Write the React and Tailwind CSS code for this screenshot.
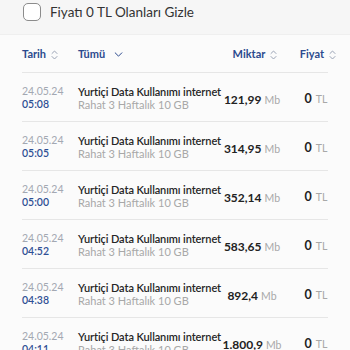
import React from 'react';

const rows = [
  { date: '24.05.24', time: '05:08', amount: '121,99' },
  { date: '24.05.24', time: '05:05', amount: '314,95' },
  { date: '24.05.24', time: '05:00', amount: '352,14' },
  { date: '24.05.24', time: '04:52', amount: '583,65' },
  { date: '24.05.24', time: '04:38', amount: '892,4' },
  { date: '24.05.24', time: '04:11', amount: '1.800,9' },
];

const SortIcon = () => (
  <svg width="7" height="10" viewBox="0 0 7 10" fill="none" stroke="#9aa3b5" strokeWidth="1" strokeLinecap="round" strokeLinejoin="round" className="ml-[5px]">
    <path d="M1 3.5 3.5 1 6 3.5" />
    <path d="M1 6.5 3.5 9 6 6.5" />
  </svg>
);

const App = () => {
  return (
    <div className="w-[350px] h-[350px] overflow-hidden bg-[#fbfbfb]" style={{ fontFamily: 'Lato, "Noto Sans", sans-serif' }}>
      {/* filtre */}
      <div className="h-[35px] bg-[#f6f6f6] border-b border-[#efefef] flex items-start pt-[3px] pl-[23px]">
        <div className="w-[18px] h-[18px] rounded-[5px] border-[1.5px] border-[#8c8c8c] bg-white" />
        <span className="ml-[9px] text-[13.5px] leading-[18px] text-[#333]">Fiyatı 0 TL Olanları Gizle</span>
      </div>

      {/* en-tête */}
      <div className="mx-[22px] h-[38px] flex items-center pt-[2px] border-b border-[#e6e6e6] text-[11px] font-bold text-[#2c4a8e]">
        <div className="w-[56px] shrink-0 flex items-center">
          Tarih <SortIcon />
        </div>
        <div className="w-[144px] shrink-0 flex items-center">
          Tümü
          <svg width="9" height="5" viewBox="0 0 10 6" fill="none" stroke="#2c4a8e" strokeWidth="1.2" strokeLinecap="round" strokeLinejoin="round" className="ml-[9px]">
            <path d="M1 1 5 5 9 1" />
          </svg>
        </div>
        <div className="w-[60px] shrink-0 flex items-center justify-center pl-[6px]">
          Miktar <SortIcon />
        </div>
        <div className="w-[68px] shrink-0 flex items-center justify-center pl-[4px]">
          Fiyat <SortIcon />
        </div>
      </div>

      {rows.map((r, i) => (
        <div key={i} className="mx-[22px] h-[49px] flex items-center pt-[2px] border-b border-[#e6e6e6]">
          <div className="w-[56px] shrink-0 text-[10.5px] leading-[13px]">
            <div className="text-[#a3a8b2]">{r.date}</div>
            <div className="text-[#2f4f94] font-semibold">{r.time}</div>
          </div>
          <div className="w-[144px] shrink-0 text-[11px] leading-[13px]">
            <div className="text-[#262626] font-semibold whitespace-nowrap tracking-[-0.1px]">Yurtiçi Data Kullanımı internet</div>
            <div className="text-[#a8a8a8]">Rahat 3 Haftalık 10 GB</div>
          </div>
          <div className="w-[60px] shrink-0 flex items-baseline justify-center pt-[3px] whitespace-nowrap">
            <span className="text-[12px] font-bold text-[#222]">{r.amount}</span>
            <span className="ml-[3px] text-[10.5px] text-[#a8a8a8]">Mb</span>
          </div>
          <div className="w-[68px] shrink-0 flex items-baseline justify-center pt-[3px]">
            <span className="text-[12.5px] font-bold text-[#222]">0</span>
            <span className="ml-[4px] text-[10.5px] text-[#a8a8a8]">TL</span>
          </div>
        </div>
      ))}
    </div>
  );
};

export default App;
